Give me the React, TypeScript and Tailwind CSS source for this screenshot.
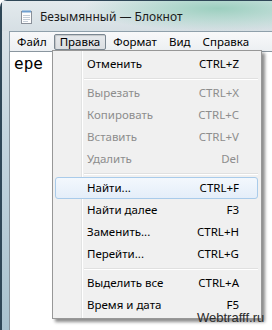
import React from "react";

type Item = { label: string; keys: string; disabled?: boolean; active?: boolean } | "sep";

const items: Item[] = [
  { label: "Отменить", keys: "CTRL+Z" },
  "sep",
  { label: "Вырезать", keys: "CTRL+X", disabled: true },
  { label: "Копировать", keys: "CTRL+C", disabled: true },
  { label: "Вставить", keys: "CTRL+V", disabled: true },
  { label: "Удалить", keys: "Del", disabled: true },
  "sep",
  { label: "Найти...", keys: "CTRL+F", active: true },
  { label: "Найти далее", keys: "F3" },
  { label: "Заменить...", keys: "CTRL+H" },
  { label: "Перейти...", keys: "CTRL+G" },
  "sep",
  { label: "Выделить все", keys: "CTRL+A" },
  { label: "Время и дата", keys: "F5" },
];

const NotepadIcon = () => (
  <svg width="11" height="14" viewBox="0 0 11 14">
    <rect x="0.5" y="1.5" width="10" height="12" fill="#fdfdfd" stroke="#8a9099" />
    <rect x="1" y="0.5" width="9" height="2" fill="#6f9fd0" />
    <line x1="2" y1="5.5" x2="9" y2="5.5" stroke="#c3ccd6" />
    <line x1="2" y1="7.5" x2="9" y2="7.5" stroke="#c3ccd6" />
    <line x1="2" y1="9.5" x2="9" y2="9.5" stroke="#c3ccd6" />
    <line x1="2" y1="11.5" x2="7" y2="11.5" stroke="#c3ccd6" />
  </svg>
);

export default function App() {
  const menus = ["Файл", "Правка", "Формат", "Вид", "Справка"];
  return (
    <div className="relative h-[330px] w-[272px] overflow-hidden bg-white font-['Noto_Sans',sans-serif] text-[12px] text-black">
      {/* window frame */}
      <div className="flex h-full flex-col rounded-tl-[7px] border-l-2 border-t border-[#2f4757] bg-[linear-gradient(#dfe6ea,#c4d5de_40%,#a9c2cf)] pl-[7px]">
        {/* title bar */}
        <div className="-ml-[7px] flex h-[30px] items-center gap-[8px] bg-[radial-gradient(ellipse_50%_75%_at_80%_25%,#9ccfbf_0%,rgba(160,210,195,0.55)_50%,transparent_100%),linear-gradient(#e3eaed,#d6dfe4)] pl-[19px] pt-[1px]">
          <NotepadIcon />
          <span className="text-[12px] text-[#1b1b1b]">Безымянный — Блокнот</span>
        </div>
        {/* menu bar */}
        <div className="flex h-[20px] items-center border-l border-t border-[#8fa0ab] bg-[linear-gradient(#f8f9fa,#eceff2)] pl-[1px] text-[11.5px]">
          {menus.map((m) => (
            <div
              key={m}
              className={
                m === "Правка"
                  ? "mx-[1px] flex h-[16px] items-center rounded-[2px] border border-[#7b8791] bg-[linear-gradient(#e6e9ec,#dcdfe2)] px-[5px] shadow-[inset_1px_1px_1px_rgba(0,0,0,0.15)]"
                  : "flex h-[16px] items-center px-[6px]"
              }
            >
              {m}
            </div>
          ))}
        </div>
        {/* edit area */}
        <div className="flex-1 border-l border-t border-[#8a969f] bg-white pl-[4px] pt-[3px]">
          <div className="font-['DejaVu_Sans_Mono',monospace] text-[16px] leading-[18px]">ере</div>
        </div>
      </div>

      {/* dropdown menu */}
      <div className="absolute left-[52px] top-[50px] w-[210px] border border-[#979797] bg-[linear-gradient(to_right,#f0f0f0_28px,#e2e3e3_28px,#e2e3e3_29px,#ffffff_29px,#ffffff_30px,#f0f0f0_30px)] py-[2px] text-[11.5px] shadow-[3px_3px_3px_rgba(0,0,0,0.45)]">
        {items.map((it, i) =>
          it === "sep" ? (
            <div key={i} className="flex h-[7px] items-center pl-[31px] pr-[3px]">
              <div className="h-[2px] w-full border-b border-t border-b-white border-t-[#e0e0e0]" />
            </div>
          ) : (
            <div
              key={i}
              className={
                "ml-[2px] mr-[3px] flex h-[22px] items-center justify-between rounded-[3px] border pl-[31px] pr-[18px] " +
                (it.active
                  ? "border-[#a9cbea] bg-[linear-gradient(#f3f8fd,#e4eef9)]"
                  : "border-transparent") +
                (it.disabled ? " text-[#8d8d8d]" : " text-black")
              }
            >
              <span>{it.label}</span>
              <span>{it.keys}</span>
            </div>
          )
        )}
      </div>

      <div className="absolute left-[197px] top-[310px] font-['Liberation_Sans',sans-serif] text-[13px] leading-[15px] text-[#2b2b2b]">
        Webtrafff.ru
      </div>
    </div>
  );
}
